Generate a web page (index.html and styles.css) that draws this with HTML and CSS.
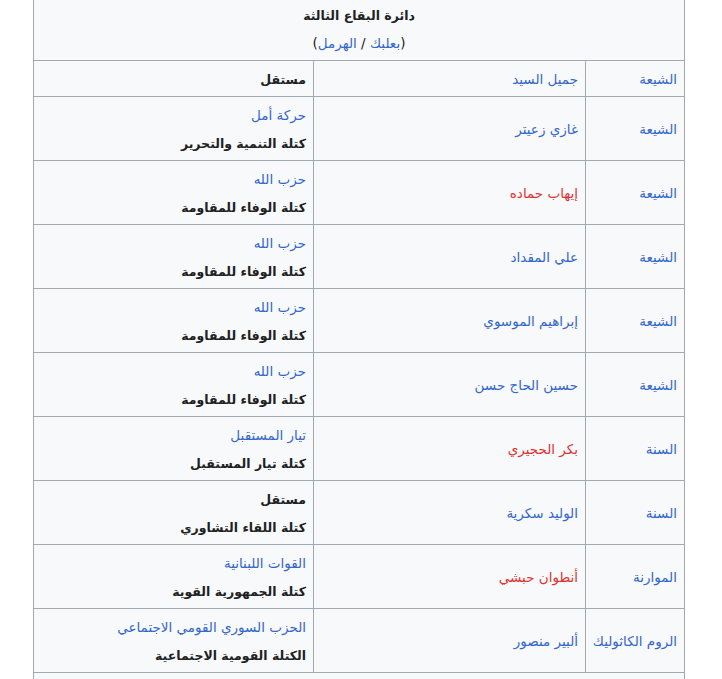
FILE: index.html
```html
<!DOCTYPE html>
<html lang="ar" dir="rtl">
<head>
<meta charset="utf-8">
<link rel="stylesheet" href="styles.css">
</head>
<body>
<div class="page">
<table class="wikitable">
<colgroup><col class="c1"><col class="c2"><col class="c3"></colgroup>
<tr><th colspan="3" class="head"><span class="title">دائرة البقاع الثالثة</span><br><span class="sub">(<a href="#">بعلبك</a> / <a href="#">الهرمل</a>)</span></th></tr>
<tr><td><a href="#">الشيعة</a></td><td><a href="#">جميل السيد</a></td><td><b>مستقل</b></td></tr>
<tr><td><a href="#">الشيعة</a></td><td><a href="#">غازي زعيتر</a></td><td><a href="#">حركة أمل</a><br><b>كتلة التنمية والتحرير</b></td></tr>
<tr><td><a href="#">الشيعة</a></td><td><a href="#" class="new">إيهاب حماده</a></td><td><a href="#">حزب الله</a><br><b>كتلة الوفاء للمقاومة</b></td></tr>
<tr><td><a href="#">الشيعة</a></td><td><a href="#">علي المقداد</a></td><td><a href="#">حزب الله</a><br><b>كتلة الوفاء للمقاومة</b></td></tr>
<tr><td><a href="#">الشيعة</a></td><td><a href="#">إبراهيم الموسوي</a></td><td><a href="#">حزب الله</a><br><b>كتلة الوفاء للمقاومة</b></td></tr>
<tr><td><a href="#">الشيعة</a></td><td><a href="#">حسين الحاج حسن</a></td><td><a href="#">حزب الله</a><br><b>كتلة الوفاء للمقاومة</b></td></tr>
<tr><td><a href="#">السنة</a></td><td><a href="#" class="new">بكر الحجيري</a></td><td><a href="#">تيار المستقبل</a><br><b>كتلة تيار المستقبل</b></td></tr>
<tr><td><a href="#">السنة</a></td><td><a href="#">الوليد سكرية</a></td><td><b>مستقل</b><br><b>كتلة اللقاء التشاوري</b></td></tr>
<tr><td><a href="#">الموارنة</a></td><td><a href="#" class="new">أنطوان حبشي</a></td><td><a href="#">القوات اللبنانية</a><br><b>كتلة الجمهورية القوية</b></td></tr>
<tr><td><a href="#">الروم الكاثوليك</a></td><td><a href="#">ألبير منصور</a></td><td><a href="#">الحزب السوري القومي الاجتماعي</a><br><b>الكتلة القومية الاجتماعية</b></td></tr>
<tr><td colspan="3" class="blank"></td></tr>
</table>
</div>
</body>
</html>
```
FILE: styles.css
```css
html, body {
  margin: 0;
  padding: 0;
  background: #ffffff;
}
.page {
  padding: 0 37px 0 34px;
  overflow: hidden;
  height: 679px;
}
.wikitable {
  margin-top: -4px;
  width: 651px;
  table-layout: fixed;
  border-collapse: collapse;
  background: #f8f9fa;
  color: #202122;
  font-family: "DejaVu Sans", sans-serif;
  font-size: 13.5px;
  line-height: 28px;
  border: 1px solid #a2a9b1;
}
.c1 { width: 99px; }
.c2 { width: 272px; }
.c3 { width: 280px; }
.wikitable th,
.wikitable td {
  border: 1px solid #a2a9b1;
  padding: 3.5px 7px;
  text-align: right;
  vertical-align: middle;
  white-space: nowrap;
}
.wikitable th.head {
  text-align: center;
  font-weight: normal;
}
.wikitable b,
.title {
  font-weight: bold;
  font-size: 12.5px;
  line-height: 1;
}
.wikitable a {
  color: #3366cc;
  text-decoration: none;
}
.wikitable a.new { color: #dd3333; }
.blank { height: 40px; }
```
